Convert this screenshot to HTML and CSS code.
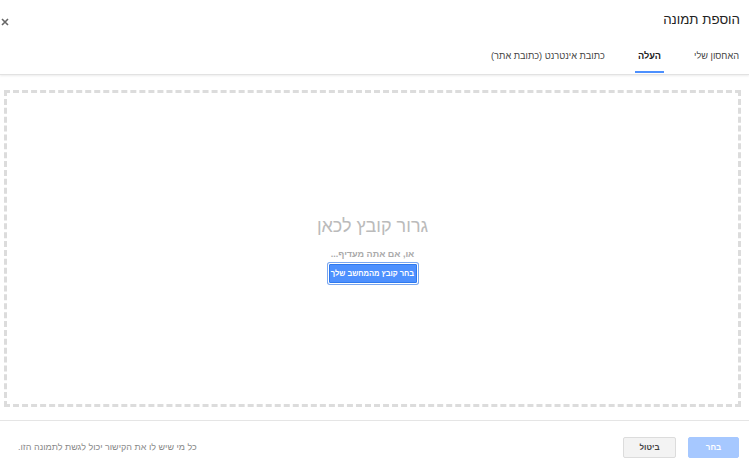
FILE: index.html
```html
<!DOCTYPE html>
<html lang="he" dir="rtl">
<head>
<meta charset="utf-8">
<title>הוספת תמונה</title>
<link rel="stylesheet" href="styles.css">
</head>
<body>
<div class="dialog">
  <header class="header">
    <div class="title-row">
      <h1 class="title">הוספת תמונה</h1>
      <button class="close" aria-label="סגור">
        <svg width="8" height="8" viewBox="0 0 8 8"><path d="M1 1L7 7M7 1L1 7" stroke="#666" stroke-width="1.6" fill="none"/></svg>
      </button>
    </div>
    <nav class="tabs">
      <span class="tab">האחסון שלי</span>
      <span class="tab active">העלה</span>
      <span class="tab">כתובת אינטרנט (כתובת אתר)</span>
    </nav>
  </header>
  <main class="main">
    <div class="dropzone">
      <div class="drop-title">גרור קובץ לכאן</div>
      <div class="drop-sub">או, אם אתה מעדיף...</div>
      <button class="pick">בחר קובץ מהמחשב שלך</button>
    </div>
  </main>
  <footer class="footer">
    <button class="btn primary">בחר</button>
    <button class="btn cancel">ביטול</button>
    <span class="note">כל מי שיש לו את הקישור יכול לגשת לתמונה הזו.</span>
  </footer>
</div>
</body>
</html>
```
FILE: styles.css
```css
html, body {
  margin: 0;
  padding: 0;
  background: #fff;
}
body {
  font-family: "Liberation Sans", Arial, sans-serif;
  width: 749px;
  height: 469px;
  overflow: hidden;
}
.dialog {
  display: flex;
  flex-direction: column;
  height: 469px;
}
.header {
  height: 75px;
  border-bottom: 1px solid #e2e2e2;
  box-shadow: 0 1px 2px rgba(0,0,0,0.08);
  display: flex;
  flex-direction: column;
  box-sizing: border-box;
}
.title-row {
  display: flex;
  align-items: center;
  justify-content: space-between;
  padding: 10px 9px 0 0;
  height: 20px;
}
.title {
  margin: 0;
  font-size: 13.3px;
  font-weight: normal;
  color: #222;
  line-height: 20px;
}
.close {
  border: 0;
  background: none;
  padding: 0;
  margin-left: 1px;
  width: 8px;
  height: 8px;
  display: flex;
  margin-top: 4px;
}
.tabs {
  display: flex;
  gap: 27px;
  padding-right: 7px;
  margin-top: auto;
  height: 30px;
}
.tab {
  font-size: 9.2px;
  color: #444;
  padding: 0 3px;
  line-height: 14px;
  padding-top: 5px;
  border-bottom: 2px solid transparent;
  box-sizing: border-box;
  height: 29px;
}
.tab.active {
  font-weight: bold;
  color: #222;
  border-bottom-color: #4d90fe;
}
.main {
  padding: 15px 8px 13px 4px;
}
.dropzone {
  height: 317px;
  box-sizing: border-box;
  border: 3px dashed #dcdcdc;
  display: flex;
  flex-direction: column;
  align-items: center;
  justify-content: center;
}
.drop-title {
  font-size: 18px;
  color: #bbb;
  line-height: 24px;
}
.drop-sub {
  margin-top: 10px;
  font-size: 9px;
  font-weight: bold;
  color: #aaa;
  line-height: 12px;
}
.pick {
  margin-top: 4px;
  font-family: inherit;
  font-size: 7.5px;
  font-weight: bold;
  color: #fff;
  background: #4d90fe;
  border: 1px solid #3079ed;
  box-shadow: 0 0 0 1px #fff, 0 0 0 2px #7aa7f0;
  height: 19px;
  width: 88px;
  padding: 0;
  border-radius: 1px;
}
.footer {
  border-top: 1px solid #e5e5e5;
  flex: 1;
  display: flex;
  align-items: center;
  padding: 4px 10px 0 18px;
  gap: 12px;
}
.btn {
  font-family: inherit;
  font-size: 8px;
  font-weight: bold;
  height: 21px;
  border-radius: 2px;
  padding: 0;
}
.primary {
  width: 51px;
  background: #a6c8ff;
  border: 1px solid #a6c8ff;
  color: #fff;
}
.cancel {
  width: 53px;
  background: #f3f3f3;
  border: 1px solid #dcdcdc;
  color: #444;
}
.note {
  margin-right: auto;
  font-size: 9px;
  color: #888;
}
```
